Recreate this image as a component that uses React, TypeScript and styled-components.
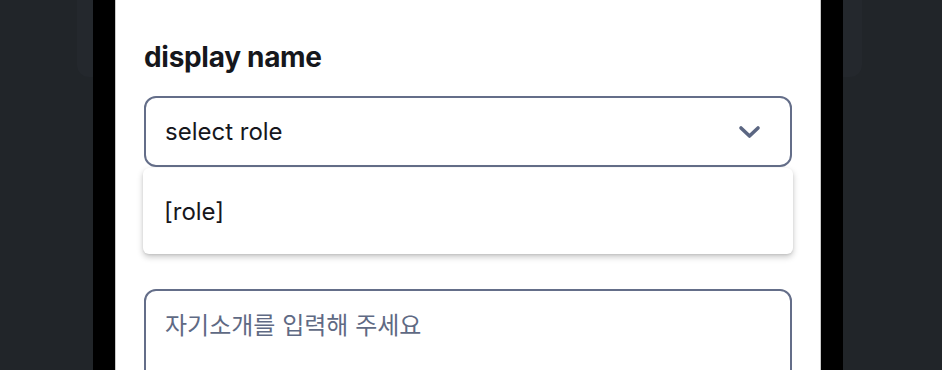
import React from "react";
import styled, { createGlobalStyle } from "styled-components";

const GlobalStyle = createGlobalStyle`
  html, body {
    margin: 0;
    padding: 0;
    background: #212529;
    font-family: Inter, "Noto Sans CJK KR", sans-serif;
    overflow: hidden;
  }
`;

const Stage = styled.div`
  position: relative;
  width: 942px;
  height: 370px;
  box-sizing: border-box;
  padding-left: 93px;
  display: flex;
  overflow: hidden;
`;

/* the card that sits behind the phone frame */
const BackCard = styled.div`
  position: absolute;
  top: -40px;
  left: 77px;
  width: 785px;
  height: 117px;
  border-radius: 12px;
  background: #24282d;
`;

const Phone = styled.div`
  position: relative;
  width: 750px;
  height: 400px;
  box-sizing: border-box;
  border: solid #000;
  border-width: 0 22px;
  background: #000;
`;

const Screen = styled.div`
  height: 100%;
  box-sizing: border-box;
  background: #fff;
  border-left: 1px solid #c9c9c9;
  border-right: 1px solid #c9c9c9;
  padding: 40px 28px 0 28px;
  display: flex;
  flex-direction: column;
`;

const Label = styled.h2`
  margin: 0;
  font-size: 28px;
  line-height: 34px;
  font-weight: 700;
  color: #16171c;
  letter-spacing: -0.3px;
`;

const SelectWrap = styled.div`
  position: relative;
  margin-top: 22px;
`;

const SelectBox = styled.button`
  width: 100%;
  height: 71px;
  box-sizing: border-box;
  border: 2px solid #646e89;
  border-radius: 12px;
  background: #fff;
  display: flex;
  align-items: center;
  justify-content: space-between;
  padding: 0 28px 0 19px;
  font-family: inherit;
  font-size: 24px;
  color: #16171c;
`;

const Menu = styled.ul`
  list-style: none;
  margin: 1px -1px 0;
  padding: 0;
  background: #fff;
  border-radius: 6px;
  box-shadow: 0 3px 6px rgba(0, 0, 0, 0.22), 0 1px 2px rgba(0, 0, 0, 0.08);
`;

const MenuItem = styled.li`
  height: 86px;
  display: flex;
  align-items: center;
  padding: 0 21px;
  font-size: 24px;
  color: #16171c;
`;

const TextArea = styled.textarea`
  margin-top: 35px;
  width: 100%;
  height: 140px;
  box-sizing: border-box;
  border: 2px solid #646e89;
  border-radius: 12px;
  padding: 15px 19px;
  font-family: inherit;
  font-size: 24px;
  resize: none;
  outline: none;
  &::placeholder {
    color: #5f6a84;
  }
`;

function Chevron() {
  return (
    <svg width="25" height="16" viewBox="0 0 25 16" fill="none">
      <path
        d="M4 4 L12.5 12 L21 4"
        stroke="#5b6682"
        strokeWidth="3.6"
        strokeLinecap="round"
        strokeLinejoin="round"
      />
    </svg>
  );
}

export default function App() {
  return (
    <>
      <GlobalStyle />
      <Stage>
        <BackCard />
        <Phone>
          <Screen>
            <Label>display name</Label>
            <SelectWrap>
              <SelectBox type="button">
                <span>select role</span>
                <Chevron />
              </SelectBox>
              <Menu>
                <MenuItem>[role]</MenuItem>
              </Menu>
            </SelectWrap>
            <TextArea placeholder="자기소개를 입력해 주세요" />
          </Screen>
        </Phone>
      </Stage>
    </>
  );
}
